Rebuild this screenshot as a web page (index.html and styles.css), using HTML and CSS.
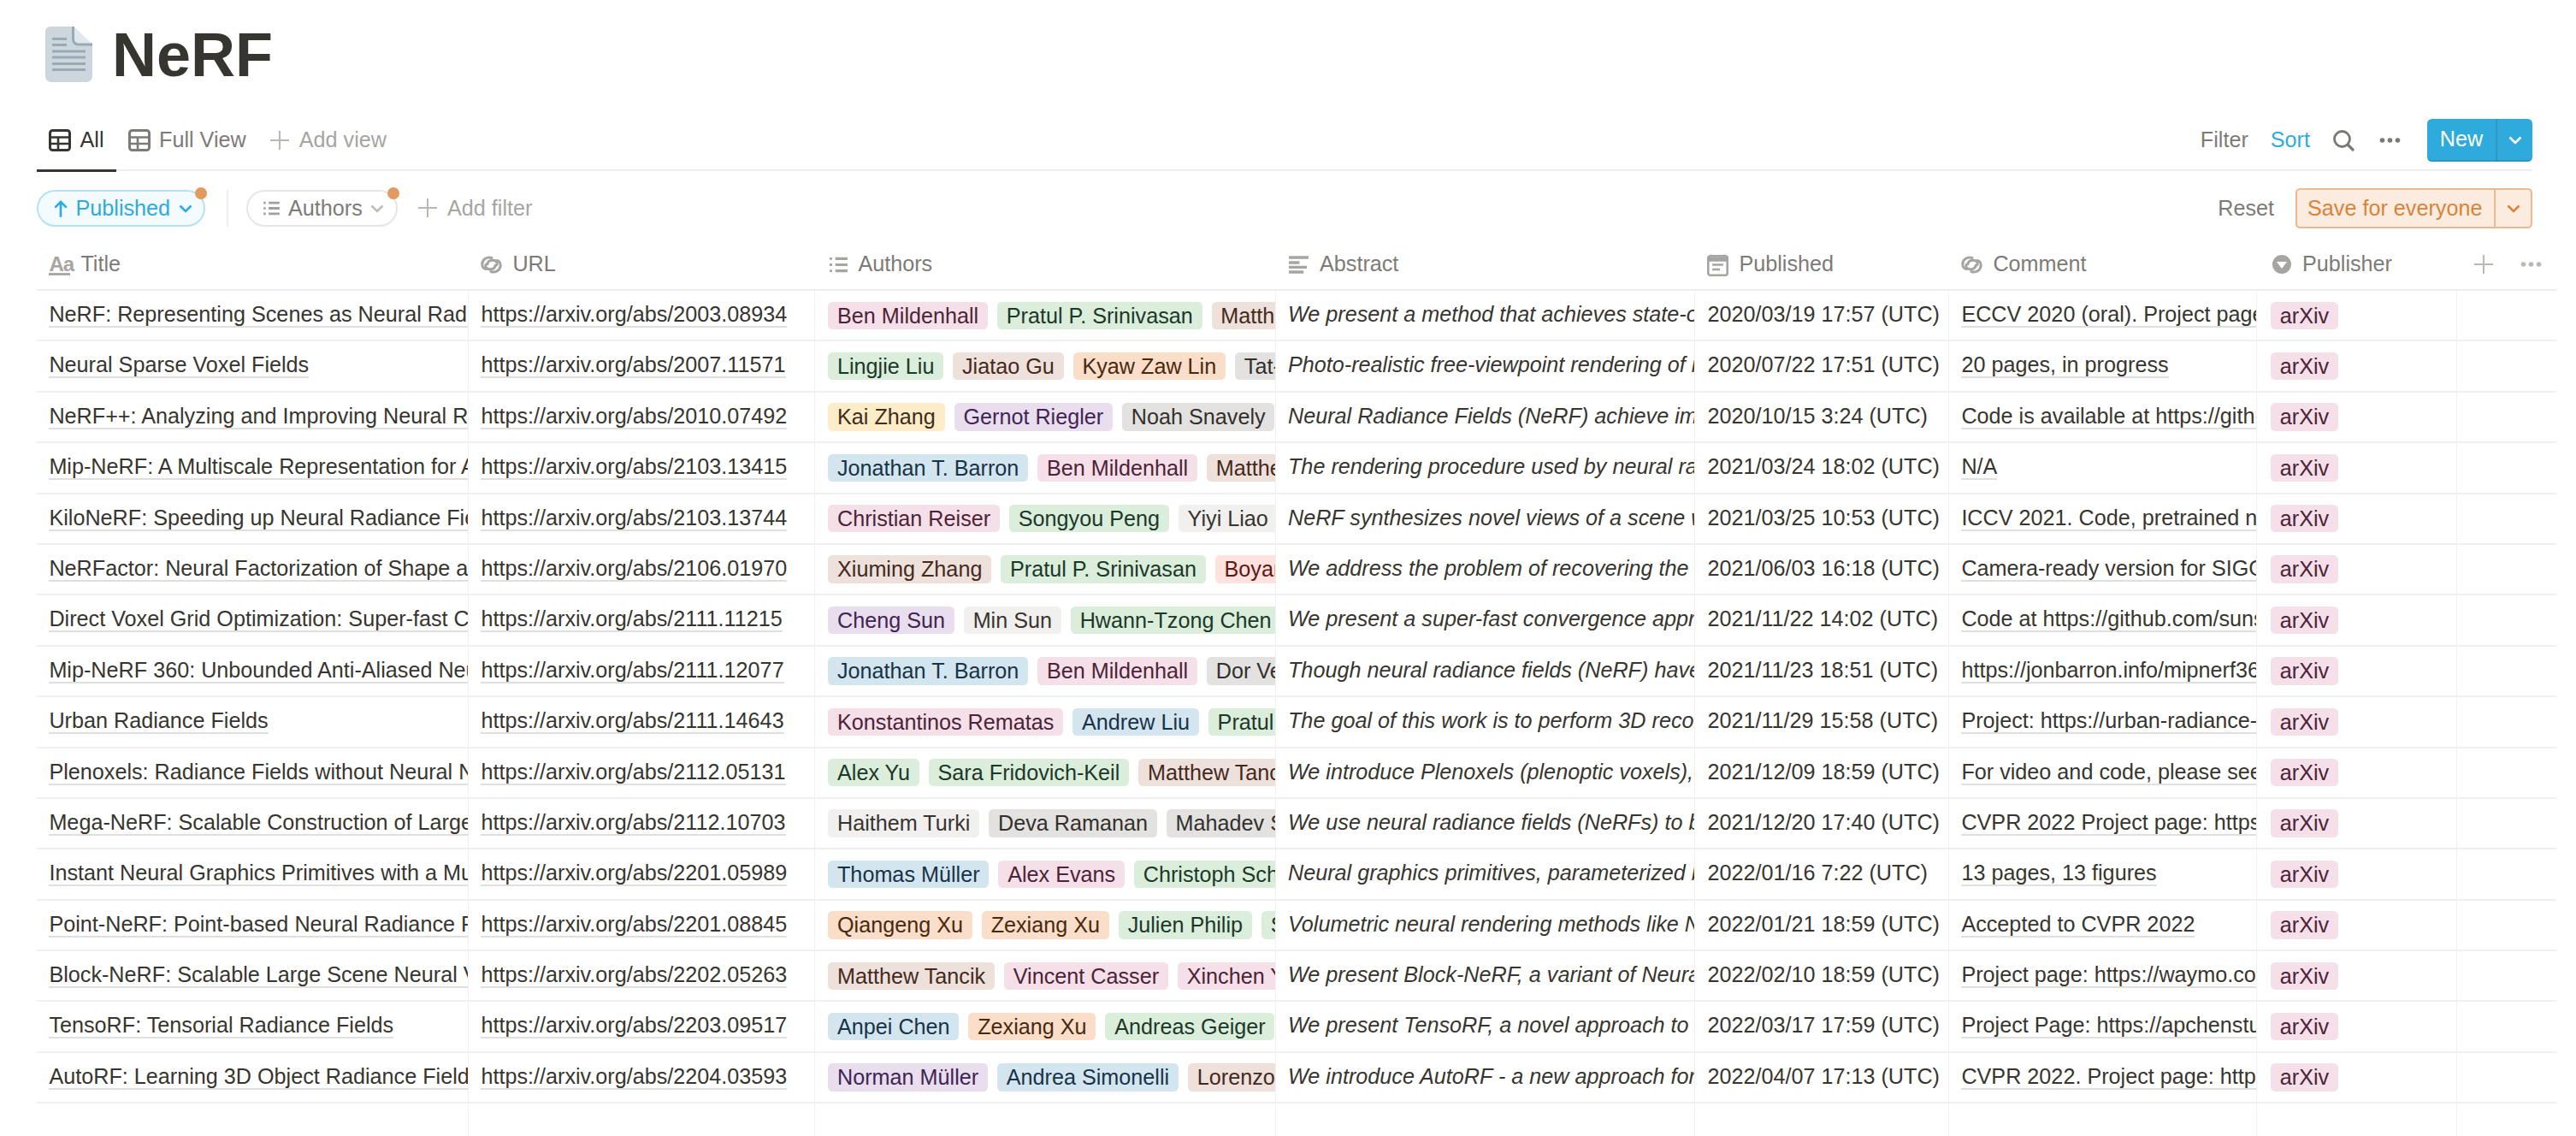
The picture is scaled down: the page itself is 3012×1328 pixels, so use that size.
FILE: index.html
```html
<!DOCTYPE html>
<html lang="en">
<head>
<meta charset="utf-8">
<title>NeRF</title>
<link rel="stylesheet" href="styles.css">
</head>
<body>
<svg class="sprites" width="0" height="0" aria-hidden="true">
  <defs>
    <symbol id="i-table" viewBox="0 0 26 26"><rect x="1.5" y="1.5" width="23" height="23" rx="3" fill="none" stroke="currentColor" stroke-width="3"/><path d="M2 9.5H24M2 17H24M11 9.5V24" fill="none" stroke="currentColor" stroke-width="2.6"/></symbol>
    <symbol id="i-plus" viewBox="0 0 22 22"><path d="M11 0V22M0 11H22" fill="none" stroke="currentColor" stroke-width="2"/></symbol>
    <symbol id="i-chev" viewBox="0 0 16 10"><path d="M1.5 1.5L8 8L14.5 1.5" fill="none" stroke="currentColor" stroke-width="2.6"/></symbol>
    <symbol id="i-link" viewBox="0 0 25 21"><path d="M13 2.5C7 .8 1.8 4.5 1.8 10C1.8 13.5 4 15.5 6.5 15.5M8 9.8C8 6 12.5 4.5 16 5.5C19 6.3 20 9 18.6 11M12 18.5C18 20.2 23.2 16.5 23.2 11C23.2 7.5 21 5.5 18.5 5.5M17 11.2C17 15 12.5 16.5 9 15.5C6 14.7 5 12 6.4 10" fill="none" stroke="currentColor" stroke-width="3" stroke-linecap="round"/></symbol>
    <symbol id="i-list" viewBox="0 0 22 20"><path d="M7 2.5H22M7 10H22M7 17.5H22" fill="none" stroke="currentColor" stroke-width="3.4"/><path d="M0 2.5H3M0 10H3M0 17.5H3" fill="none" stroke="currentColor" stroke-width="3"/></symbol>
    <symbol id="i-text" viewBox="0 0 24 22"><path d="M0 2H24M0 8.3H13M0 14H22M0 20H18" fill="none" stroke="currentColor" stroke-width="3.6"/></symbol>
    <symbol id="i-date" viewBox="0 0 25 27"><rect x="1.3" y="3.3" width="22.4" height="22.4" rx="2.5" fill="none" stroke="currentColor" stroke-width="2.6"/><path d="M1 5H24V9H1ZM5 1.5V4M20 1.5V4" fill="currentColor" stroke="currentColor" stroke-width="1.6"/><path d="M6 13.5H19M6 19H15" fill="none" stroke="currentColor" stroke-width="2.6"/></symbol>
    <symbol id="i-select" viewBox="0 0 22 22"><circle cx="11" cy="11" r="11" fill="currentColor"/><path d="M5 8H17L11 16Z" fill="#fff"/></symbol>
    <symbol id="i-dots" viewBox="0 0 24 6"><circle cx="3" cy="3" r="2.8" fill="currentColor"/><circle cx="12" cy="3" r="2.8" fill="currentColor"/><circle cx="21" cy="3" r="2.8" fill="currentColor"/></symbol>
  </defs>
</svg>

<header class="page-title">
  <svg class="doc-icon" viewBox="0 0 55 65" aria-hidden="true">
    <path d="M6 0H33L55 21V58a7 7 0 0 1-7 7H7a7 7 0 0 1-7-7V6a6 6 0 0 1 6-6Z" fill="#ccd6dd"/>
    <path d="M33 0L55 21H39a6 6 0 0 1-6-6Z" fill="#e1e8ed"/>
    <path d="M32.5 0V15a6 6 0 0 0 6 6H55" fill="none" stroke="#99aab5" stroke-width="3"/>
    <path d="M8 14.5H25M8 21.5H25M8 29H47M8 36H47M8 43.5H47M8 50.5H47" fill="none" stroke="#99aab5" stroke-width="3"/>
  </svg>
  <h1>NeRF</h1>
</header>

<nav class="tabs">
  <div class="tab tab-active"><svg class="tab-icon"><use href="#i-table"/></svg><span>All</span></div>
  <div class="tab"><svg class="tab-icon"><use href="#i-table"/></svg><span>Full View</span></div>
  <div class="tab tab-add"><svg class="plus-icon"><use href="#i-plus"/></svg><span>Add view</span></div>
  <div class="tab-actions">
    <span class="filter-link">Filter</span>
    <span class="sort-link">Sort</span>
    <svg class="search-icon" viewBox="0 0 25 25" aria-hidden="true"><circle cx="10.5" cy="10.5" r="9" fill="none" stroke="currentColor" stroke-width="2.8"/><path d="M16.5 16.5L24 24" fill="none" stroke="currentColor" stroke-width="3.2"/></svg>
    <svg class="dots-icon"><use href="#i-dots"/></svg>
    <div class="split new-btn"><span class="split-main">New</span><span class="split-arrow"><svg class="chev"><use href="#i-chev"/></svg></span></div>
  </div>
</nav>

<section class="filters">
  <div class="pill pill-active"><svg class="arrow-up" viewBox="0 0 18 22" aria-hidden="true"><path d="M9 22V2M1.5 9.5L9 2L16.5 9.5" fill="none" stroke="currentColor" stroke-width="3"/></svg><span>Published</span><svg class="chev"><use href="#i-chev"/></svg><i class="dot"></i></div>
  <div class="vsep"></div>
  <div class="pill pill-authors"><svg class="pill-list"><use href="#i-list"/></svg><span>Authors</span><svg class="chev chev-light"><use href="#i-chev"/></svg><i class="dot"></i></div>
  <div class="add-filter"><svg class="plus-icon"><use href="#i-plus"/></svg><span>Add filter</span></div>
  <div class="filter-actions">
    <span>Reset</span>
    <div class="split save-btn"><span class="split-main">Save for everyone</span><span class="split-arrow"><svg class="chev"><use href="#i-chev"/></svg></span></div>
  </div>
</section>

<main class="table">
  <div class="row head">
    <div class="hcell"><svg class="h-icon aa" viewBox="0 0 25 25" aria-hidden="true"><path d="M0 23.5H25" stroke="currentColor" stroke-width="2.8"/></svg><span class="aa-text">Aa</span><span>Title</span></div>
    <div class="hcell"><svg class="h-icon"><use href="#i-link"/></svg><span>URL</span></div>
    <div class="hcell"><svg class="h-icon h-list"><use href="#i-list"/></svg><span>Authors</span></div>
    <div class="hcell"><svg class="h-icon"><use href="#i-text"/></svg><span>Abstract</span></div>
    <div class="hcell"><svg class="h-icon h-date"><use href="#i-date"/></svg><span>Published</span></div>
    <div class="hcell"><svg class="h-icon"><use href="#i-link"/></svg><span>Comment</span></div>
    <div class="hcell hcell-pub"><svg class="h-icon h-select"><use href="#i-select"/></svg><span>Publisher</span></div>
    <div class="hcell-end"><svg class="plus-icon"><use href="#i-plus"/></svg><svg class="dots-icon dots-light"><use href="#i-dots"/></svg></div>
  </div>

  <div class="row">
    <div class="cell"><span class="u">NeRF: Representing Scenes as Neural Radiance Fields for View Synthesis</span></div>
    <div class="cell"><span class="u">https://arxiv.org/abs/2003.08934</span></div>
    <div class="cell tags"><span class="tag pink">Ben Mildenhall</span><span class="tag green">Pratul P. Srinivasan</span><span class="tag brown">Matthew Tancik</span></div>
    <div class="cell em">We present a method that achieves state-of-the-art results for synthesizing</div>
    <div class="cell">2020/03/19 17:57 (UTC)</div>
    <div class="cell"><span class="u">ECCV 2020 (oral). Project page: https://www.matthewtancik.com/nerf</span></div>
    <div class="cell tags pub"><span class="tag pink">arXiv</span></div>
    <div class="cell-end"></div>
  </div>
  <div class="row">
    <div class="cell"><span class="u">Neural Sparse Voxel Fields</span></div>
    <div class="cell"><span class="u">https://arxiv.org/abs/2007.11571</span></div>
    <div class="cell tags"><span class="tag green">Lingjie Liu</span><span class="tag brown">Jiatao Gu</span><span class="tag orange">Kyaw Zaw Lin</span><span class="tag gray">Tat-Seng Chua</span></div>
    <div class="cell em">Photo-realistic free-viewpoint rendering of real-world scenes using classical</div>
    <div class="cell">2020/07/22 17:51 (UTC)</div>
    <div class="cell"><span class="u">20 pages, in progress</span></div>
    <div class="cell tags pub"><span class="tag pink">arXiv</span></div>
    <div class="cell-end"></div>
  </div>
  <div class="row">
    <div class="cell"><span class="u">NeRF++: Analyzing and Improving Neural Radiance Fields</span></div>
    <div class="cell"><span class="u">https://arxiv.org/abs/2010.07492</span></div>
    <div class="cell tags"><span class="tag yellow">Kai Zhang</span><span class="tag purple">Gernot Riegler</span><span class="tag gray">Noah Snavely</span><span class="tag brown">Vladlen Koltun</span></div>
    <div class="cell em">Neural Radiance Fields (NeRF) achieve impressive view synthesis results</div>
    <div class="cell">2020/10/15 3:24 (UTC)</div>
    <div class="cell"><span class="u">Code is available at https://github.com/Kai-46/nerfplusplus</span></div>
    <div class="cell tags pub"><span class="tag pink">arXiv</span></div>
    <div class="cell-end"></div>
  </div>
  <div class="row">
    <div class="cell"><span class="u">Mip-NeRF: A Multiscale Representation for Anti-Aliasing Neural Radiance Fields</span></div>
    <div class="cell"><span class="u">https://arxiv.org/abs/2103.13415</span></div>
    <div class="cell tags"><span class="tag blue">Jonathan T. Barron</span><span class="tag pink">Ben Mildenhall</span><span class="tag brown">Matthew Tancik</span></div>
    <div class="cell em">The rendering procedure used by neural radiance fields (NeRF) samples</div>
    <div class="cell">2021/03/24 18:02 (UTC)</div>
    <div class="cell"><span class="u">N/A</span></div>
    <div class="cell tags pub"><span class="tag pink">arXiv</span></div>
    <div class="cell-end"></div>
  </div>
  <div class="row">
    <div class="cell"><span class="u">KiloNeRF: Speeding up Neural Radiance Fields with Thousands of Tiny MLPs</span></div>
    <div class="cell"><span class="u">https://arxiv.org/abs/2103.13744</span></div>
    <div class="cell tags"><span class="tag pink">Christian Reiser</span><span class="tag green">Songyou Peng</span><span class="tag plain">Yiyi Liao</span><span class="tag green">Andreas Geiger</span></div>
    <div class="cell em">NeRF synthesizes novel views of a scene with unprecedented quality</div>
    <div class="cell">2021/03/25 10:53 (UTC)</div>
    <div class="cell"><span class="u">ICCV 2021. Code, pretrained networks and an interactive viewer</span></div>
    <div class="cell tags pub"><span class="tag pink">arXiv</span></div>
    <div class="cell-end"></div>
  </div>
  <div class="row">
    <div class="cell"><span class="u">NeRFactor: Neural Factorization of Shape and Reflectance Under an Unknown Illumination</span></div>
    <div class="cell"><span class="u">https://arxiv.org/abs/2106.01970</span></div>
    <div class="cell tags"><span class="tag brown">Xiuming Zhang</span><span class="tag green">Pratul P. Srinivasan</span><span class="tag red">Boyang Deng</span></div>
    <div class="cell em">We address the problem of recovering the shape and spatially-varying</div>
    <div class="cell">2021/06/03 16:18 (UTC)</div>
    <div class="cell"><span class="u">Camera-ready version for SIGGRAPH Asia 2021</span></div>
    <div class="cell tags pub"><span class="tag pink">arXiv</span></div>
    <div class="cell-end"></div>
  </div>
  <div class="row">
    <div class="cell"><span class="u">Direct Voxel Grid Optimization: Super-fast Convergence for Radiance Fields Reconstruction</span></div>
    <div class="cell"><span class="u">https://arxiv.org/abs/2111.11215</span></div>
    <div class="cell tags"><span class="tag purple">Cheng Sun</span><span class="tag plain">Min Sun</span><span class="tag green">Hwann-Tzong Chen</span></div>
    <div class="cell em">We present a super-fast convergence approach to reconstructing the</div>
    <div class="cell">2021/11/22 14:02 (UTC)</div>
    <div class="cell"><span class="u">Code at https://github.com/sunset1995/DirectVoxGO</span></div>
    <div class="cell tags pub"><span class="tag pink">arXiv</span></div>
    <div class="cell-end"></div>
  </div>
  <div class="row">
    <div class="cell"><span class="u">Mip-NeRF 360: Unbounded Anti-Aliased Neural Radiance Fields</span></div>
    <div class="cell"><span class="u">https://arxiv.org/abs/2111.12077</span></div>
    <div class="cell tags"><span class="tag blue">Jonathan T. Barron</span><span class="tag pink">Ben Mildenhall</span><span class="tag gray">Dor Verbin</span></div>
    <div class="cell em">Though neural radiance fields (NeRF) have demonstrated impressive view</div>
    <div class="cell">2021/11/23 18:51 (UTC)</div>
    <div class="cell"><span class="u">https://jonbarron.info/mipnerf360/</span></div>
    <div class="cell tags pub"><span class="tag pink">arXiv</span></div>
    <div class="cell-end"></div>
  </div>
  <div class="row">
    <div class="cell"><span class="u">Urban Radiance Fields</span></div>
    <div class="cell"><span class="u">https://arxiv.org/abs/2111.14643</span></div>
    <div class="cell tags"><span class="tag pink">Konstantinos Rematas</span><span class="tag blue">Andrew Liu</span><span class="tag green">Pratul P. Srinivasan</span></div>
    <div class="cell em">The goal of this work is to perform 3D reconstruction and novel view</div>
    <div class="cell">2021/11/29 15:58 (UTC)</div>
    <div class="cell"><span class="u">Project: https://urban-radiance-fields.github.io/</span></div>
    <div class="cell tags pub"><span class="tag pink">arXiv</span></div>
    <div class="cell-end"></div>
  </div>
  <div class="row">
    <div class="cell"><span class="u">Plenoxels: Radiance Fields without Neural Networks</span></div>
    <div class="cell"><span class="u">https://arxiv.org/abs/2112.05131</span></div>
    <div class="cell tags"><span class="tag green">Alex Yu</span><span class="tag green">Sara Fridovich-Keil</span><span class="tag brown">Matthew Tancik</span></div>
    <div class="cell em">We introduce Plenoxels (plenoptic voxels), a system for photorealistic</div>
    <div class="cell">2021/12/09 18:59 (UTC)</div>
    <div class="cell"><span class="u">For video and code, please see https://alexyu.net/plenoxels</span></div>
    <div class="cell tags pub"><span class="tag pink">arXiv</span></div>
    <div class="cell-end"></div>
  </div>
  <div class="row">
    <div class="cell"><span class="u">Mega-NeRF: Scalable Construction of Large-Scale NeRFs for Virtual Fly-Throughs</span></div>
    <div class="cell"><span class="u">https://arxiv.org/abs/2112.10703</span></div>
    <div class="cell tags"><span class="tag plain">Haithem Turki</span><span class="tag gray">Deva Ramanan</span><span class="tag gray">Mahadev Satyanarayanan</span></div>
    <div class="cell em">We use neural radiance fields (NeRFs) to build interactive 3D environments</div>
    <div class="cell">2021/12/20 17:40 (UTC)</div>
    <div class="cell"><span class="u">CVPR 2022 Project page: https://meganerf.cmusatyalab.org/</span></div>
    <div class="cell tags pub"><span class="tag pink">arXiv</span></div>
    <div class="cell-end"></div>
  </div>
  <div class="row">
    <div class="cell"><span class="u">Instant Neural Graphics Primitives with a Multiresolution Hash Encoding</span></div>
    <div class="cell"><span class="u">https://arxiv.org/abs/2201.05989</span></div>
    <div class="cell tags"><span class="tag blue">Thomas Müller</span><span class="tag pink">Alex Evans</span><span class="tag green">Christoph Schied</span></div>
    <div class="cell em">Neural graphics primitives, parameterized by fully connected neural networks</div>
    <div class="cell">2022/01/16 7:22 (UTC)</div>
    <div class="cell"><span class="u">13 pages, 13 figures</span></div>
    <div class="cell tags pub"><span class="tag pink">arXiv</span></div>
    <div class="cell-end"></div>
  </div>
  <div class="row">
    <div class="cell"><span class="u">Point-NeRF: Point-based Neural Radiance Fields</span></div>
    <div class="cell"><span class="u">https://arxiv.org/abs/2201.08845</span></div>
    <div class="cell tags"><span class="tag orange">Qiangeng Xu</span><span class="tag orange">Zexiang Xu</span><span class="tag green">Julien Philip</span><span class="tag green">Sai Bi</span></div>
    <div class="cell em">Volumetric neural rendering methods like NeRF generate high-quality view</div>
    <div class="cell">2022/01/21 18:59 (UTC)</div>
    <div class="cell"><span class="u">Accepted to CVPR 2022</span></div>
    <div class="cell tags pub"><span class="tag pink">arXiv</span></div>
    <div class="cell-end"></div>
  </div>
  <div class="row">
    <div class="cell"><span class="u">Block-NeRF: Scalable Large Scene Neural View Synthesis</span></div>
    <div class="cell"><span class="u">https://arxiv.org/abs/2202.05263</span></div>
    <div class="cell tags"><span class="tag brown">Matthew Tancik</span><span class="tag pink">Vincent Casser</span><span class="tag pink">Xinchen Yan</span></div>
    <div class="cell em">We present Block-NeRF, a variant of Neural Radiance Fields that can</div>
    <div class="cell">2022/02/10 18:59 (UTC)</div>
    <div class="cell"><span class="u">Project page: https://waymo.com/research/block-nerf/</span></div>
    <div class="cell tags pub"><span class="tag pink">arXiv</span></div>
    <div class="cell-end"></div>
  </div>
  <div class="row">
    <div class="cell"><span class="u">TensoRF: Tensorial Radiance Fields</span></div>
    <div class="cell"><span class="u">https://arxiv.org/abs/2203.09517</span></div>
    <div class="cell tags"><span class="tag blue">Anpei Chen</span><span class="tag orange">Zexiang Xu</span><span class="tag green">Andreas Geiger</span></div>
    <div class="cell em">We present TensoRF, a novel approach to model and reconstruct radiance</div>
    <div class="cell">2022/03/17 17:59 (UTC)</div>
    <div class="cell"><span class="u">Project Page: https://apchenstu.github.io/TensoRF/</span></div>
    <div class="cell tags pub"><span class="tag pink">arXiv</span></div>
    <div class="cell-end"></div>
  </div>
  <div class="row">
    <div class="cell"><span class="u">AutoRF: Learning 3D Object Radiance Fields from Single View Observations</span></div>
    <div class="cell"><span class="u">https://arxiv.org/abs/2204.03593</span></div>
    <div class="cell tags"><span class="tag purple">Norman Müller</span><span class="tag blue">Andrea Simonelli</span><span class="tag brown">Lorenzo Porzi</span></div>
    <div class="cell em">We introduce AutoRF - a new approach for learning neural 3D object</div>
    <div class="cell">2022/04/07 17:13 (UTC)</div>
    <div class="cell"><span class="u">CVPR 2022. Project page: https://sirwyver.github.io/AutoRF/</span></div>
    <div class="cell tags pub"><span class="tag pink">arXiv</span></div>
    <div class="cell-end"></div>
  </div>

  <div class="row filler">
    <div class="cell"></div><div class="cell"></div><div class="cell"></div><div class="cell"></div><div class="cell"></div><div class="cell"></div><div class="cell"></div><div class="cell-end"></div>
  </div>
</main>
</body>
</html>
```
FILE: styles.css
```css
* { box-sizing: border-box; }
html, body { margin: 0; padding: 0; background: #fff; }
body {
  width: 3012px; height: 1328px; overflow: hidden;
  font-family: "Liberation Sans", Arial, sans-serif;
  font-size: 25.2px; line-height: 1.5; color: #37352f;
}
.sprites { position: absolute; }

.page-title { display: flex; align-items: center; height: 125px; padding: 3px 0 0 53px; gap: 27px; }
.doc-icon { width: 55px; height: 65px; flex: none; margin-bottom: 1px; margin-right: -4px; }
.page-title h1 { margin: 0; font-size: 72px; line-height: 1.2; font-weight: 700; color: #37352f; }

.tabs { display: flex; align-items: center; height: 75px; padding-top: 5px; margin: 0 51px 0 43px; border-bottom: 2px solid #ededec; color: #7d7b77; }
.tab { display: flex; align-items: center; height: 70px; padding: 0 14px 5px; gap: 10.5px; position: relative; top: 2px; }
.tab-active { color: #37352f; box-shadow: inset 0 -3px 0 #37352f; }
.tab-icon { width: 26px; height: 26px; flex: none; }
.tab-add { color: #a6a5a1; gap: 12px; }
.plus-icon { width: 22px; height: 22px; flex: none; color: #b9b8b5; }
.tab-actions { margin-left: auto; display: flex; align-items: center; gap: 28px; }
.filter-link { margin-right: -2px; }
.sort-link { color: #2eaadc; margin-right: -1px; }
.search-icon { width: 25px; height: 25px; color: #7a7873; margin-right: 1px; }
.dots-icon { width: 25px; height: 6px; color: #7a7873; margin-right: 3px; }
.dots-light { color: #b9b8b5; margin: 0; }

.split { display: flex; align-items: stretch; border-radius: 5.4px; overflow: hidden; }
.split-main { display: flex; align-items: center; }
.split-arrow { display: flex; align-items: center; justify-content: center; width: 43px; border-left: 2px solid rgba(55, 53, 47, .16); }
.chev { width: 16px; height: 10px; flex: none; }
.new-btn { height: 50px; width: 123px; background: #2eaadc; color: #fff; box-shadow: inset 0 -2px 0 rgba(15, 15, 15, .1); }
.new-btn .split-main { flex: 1; justify-content: center; padding-bottom: 3px; }

.filters { display: flex; align-items: center; margin: 20px 51px 0 43px; height: 47px; color: #7d7b77; }
.pill { position: relative; display: flex; align-items: center; height: 43px; border: 2px solid #e6e6e5; border-radius: 22px; padding: 0 0 0 18px; gap: 9.5px; flex: none; }
.pill-active { width: 197px; background: #f3fbfe; border-color: #b5e2f3; color: #2eaadc; }
.pill-authors { width: 177px; }
.arrow-up { width: 16px; height: 20px; flex: none; }
.vsep { width: 2px; height: 43px; background: #ededec; margin: 0 21px 0 25px; }
.pill-list { width: 19px; height: 17px; color: #a09f9b; flex: none; margin-right: .5px; }
.chev-light { color: #bdbcb9; }
.dot { position: absolute; top: -5px; right: -4px; width: 14px; height: 14px; border-radius: 50%; background: #e39a5e; }
.add-filter { display: flex; align-items: center; gap: 12px; margin: 0 0 0 24px; color: #a6a5a1; }
.filter-actions { margin-left: auto; display: flex; align-items: center; gap: 25px; }
.save-btn { width: 277px; height: 47px; background: #fbecdf; border: 2px solid #ecb88f; color: #d9833a; }
.save-btn .split-main { flex: 1; padding: 0 0 0 12px; }
.save-btn .split-arrow { border-left-color: #ecb88f; width: 43px; }

.table { margin: 13px 23px 0 43px; }
.row { display: grid; grid-template-columns: 505px 405px 538.6px 490.4px 297px 360px 234px 1fr; height: 59.4px; border-bottom: 2px solid #efefee; }
.row.head { height: 60px; border-bottom-color: #ededec; color: #7d7b77; }
.row.filler { height: 37.6px; border-bottom: 0; }
.hcell { display: flex; align-items: center; gap: 12px; padding: 0 0 0 14.4px; position: relative; }
.hcell-pub { padding-left: 18px; gap: 13px; }
.hcell-end { display: flex; align-items: center; justify-content: space-between; padding: 0 17px 0 20px; color: #b9b8b5; }
.h-icon { width: 25px; height: 21px; flex: none; color: #a6a5a1; }
.h-list { width: 21px; height: 19px; margin-left: 3px; }
.h-date { height: 27px; }
.h-select { width: 22px; height: 22px; }
.aa { position: absolute; left: 14.4px; top: 17px; height: 25px; }
.aa-text { width: 25px; font-weight: 700; font-size: 24px; color: #a6a5a1; letter-spacing: -1px; }

.cell { position: relative; display: block; padding: 0 1.8px 0 14.4px; overflow: hidden; white-space: nowrap; line-height: 55px; border-right: 1px solid #f1f1f0; }
.cell-end { display: block; }
.u { border-bottom: 2px solid rgba(55, 53, 47, .16); }
.em { font-style: italic; }
.tags { display: flex; gap: 11px; align-items: center; padding: 0 0 0 15.2px; line-height: 32.4px; }
.tags.pub { padding-left: 16px; }
.tag { flex: none; display: block; height: 32.4px; padding: 0 10.8px; border-radius: 5.4px; }
.pink { background: #f5e0e9; color: #4c2337; }
.green { background: #dbeddb; color: #1c3829; }
.brown { background: #eee0da; color: #442a1e; }
.orange { background: #fadec9; color: #49290e; }
.gray { background: #e3e2e0; color: #32302c; }
.yellow { background: #fdecc8; color: #402c1b; }
.purple { background: #e8deee; color: #412454; }
.blue { background: #d3e5ef; color: #183347; }
.red { background: #ffe2dd; color: #5d1715; }
.plain { background: #f1f0ef; color: #37352f; }
```
